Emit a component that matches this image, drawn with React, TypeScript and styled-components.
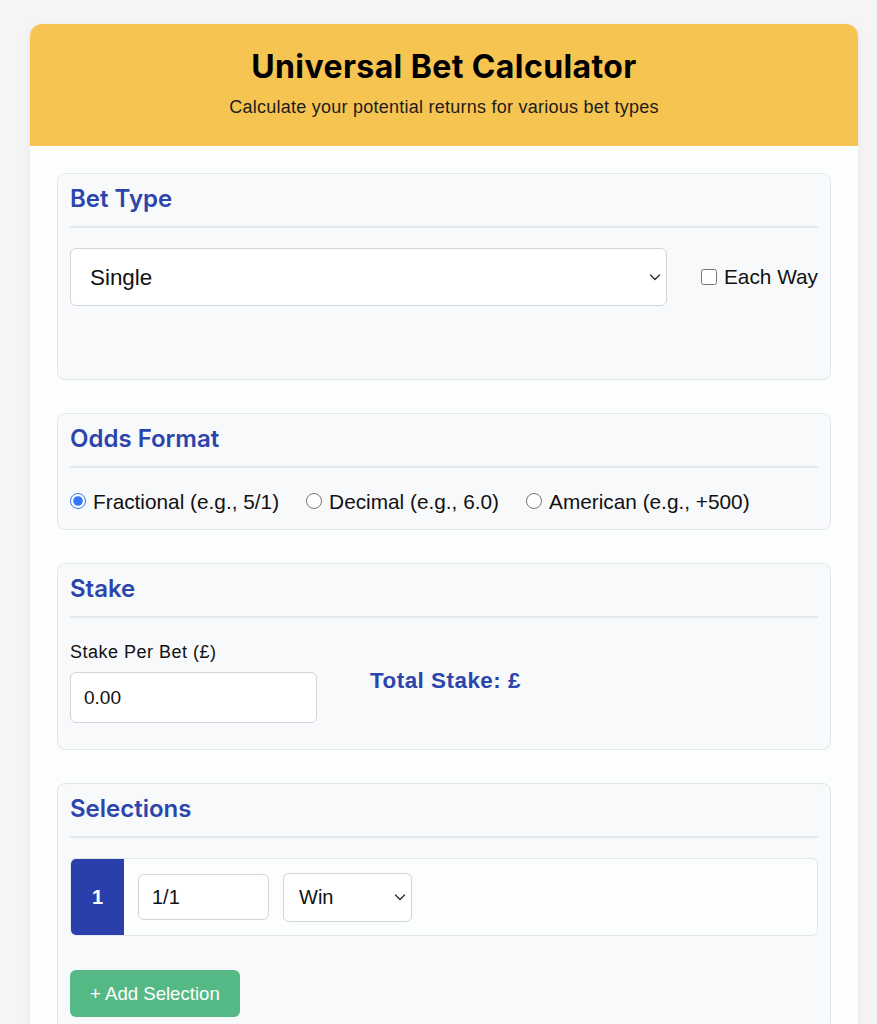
import React, { useState } from "react";
import styled, { createGlobalStyle } from "styled-components";

const GlobalStyle = createGlobalStyle`
  html, body {
    margin: 0;
    padding: 0;
    background: #f5f5f5;
  }
  body {
    font-family: "Liberation Sans", Arial, sans-serif;
    color: #111;
  }
  * { box-sizing: border-box; }
`;

const Container = styled.div`
  margin: 24px 19px 0 30px;
  background: #fcfdfd;
  border-radius: 12px;
  box-shadow: 0 2px 10px rgba(0, 0, 0, 0.06);
  overflow: hidden;
`;

const Header = styled.header`
  background: #f5c451;
  text-align: center;
  padding: 24px 20px 27px;
`;

const Title = styled.h1`
  margin: 0 0 10px;
  font-family: Inter, "Noto Sans", sans-serif;
  font-size: 32px;
  font-weight: 700;
  line-height: 38px;
  letter-spacing: 0.4px;
  color: #000;
`;

const Subtitle = styled.p`
  margin: 0;
  font-size: 18px;
  line-height: 23px;
  letter-spacing: 0.25px;
  color: #1c1c1c;
`;

const Body = styled.main`
  padding: 27px 27px 40px;
  display: flex;
  flex-direction: column;
  gap: 33px;
`;

const Section = styled.section`
  background: #f8f9fa;
  border: 1px solid #e3e6ea;
  border-radius: 8px;
  padding: 10px 12px 13px;
`;

const SectionTitle = styled.h2`
  margin: 0 0 20px;
  padding-bottom: 13px;
  border-bottom: 2px solid #e6e8ef;
  font-family: Inter, "Noto Sans", sans-serif;
  font-size: 24px;
  font-weight: 600;
  line-height: 29px;
  color: #2b45ad;
`;

const SectionBody = styled.div<{ $minHeight?: number }>`
  min-height: ${(p) => (p.$minHeight ? `${p.$minHeight}px` : "auto")};
`;

const Row = styled.div<{ $gap: number }>`
  display: flex;
  align-items: center;
  gap: ${(p) => p.$gap}px;
`;

const SelectWrap = styled.div<{ $width?: number }>`
  position: relative;
  flex: ${(p) => (p.$width ? "none" : "1")};
  width: ${(p) => (p.$width ? `${p.$width}px` : "auto")};
  svg {
    position: absolute;
    right: 5px;
    top: 50%;
    transform: translateY(-50%);
    pointer-events: none;
  }
`;

const Select = styled.select<{ $height: number; $size: number }>`
  appearance: none;
  width: 100%;
  height: ${(p) => p.$height}px;
  padding: 0 30px 0 ${(p) => (p.$size > 21 ? 19 : 15)}px;
  font-family: "Liberation Sans", Arial, sans-serif;
  font-size: ${(p) => p.$size}px;
  color: #111;
  background: #fff;
  border: 1px solid #cfd3da;
  border-radius: 6px;
  outline: none;
`;

const CheckLabel = styled.label`
  display: flex;
  align-items: center;
  gap: 7px;
  font-size: 20.8px;
  color: #111;
  white-space: nowrap;
  input {
    width: 16px;
    height: 16px;
    margin: 0;
  }
`;

const RadioRow = styled.div`
  display: flex;
  align-items: center;
  gap: 27px;
  height: 26px;
  margin-bottom: 2px;
`;

const RadioLabel = styled.label`
  display: flex;
  align-items: center;
  gap: 7px;
  font-size: 20.8px;
  line-height: 23px;
  color: #111;
  white-space: nowrap;
  input {
    width: 16px;
    height: 16px;
    margin: 0;
    accent-color: #3478f6;
  }
`;

const Field = styled.div`
  padding: 4px 0 13px;
`;

const FieldLabel = styled.label`
  display: block;
  margin-bottom: 10px;
  font-size: 18px;
  line-height: 20px;
  letter-spacing: 0.5px;
  color: #111;
`;

const TextInput = styled.input<{ $width: number; $height: number }>`
  width: ${(p) => p.$width}px;
  height: ${(p) => p.$height}px;
  padding: 0 13px;
  font-family: "Liberation Sans", Arial, sans-serif;
  font-size: ${(p) => (p.$height > 48 ? 19 : 20)}px;
  color: #111;
  background: #fff;
  border: 1px solid #cfd3da;
  border-radius: 6px;
  outline: none;
`;

const TotalStake = styled.div`
  font-size: 22.4px;
  font-weight: 700;
  letter-spacing: 0.5px;
  color: #2b45ad;
  padding-bottom: 13px;
`;

const SelectionRow = styled.div`
  display: flex;
  align-items: center;
  gap: 14px;
  height: 78px;
  background: #fcfdfd;
  border: 1px solid #e3e6ea;
  border-radius: 6px;
  overflow: hidden;
`;

const Badge = styled.div`
  width: 53px;
  align-self: stretch;
  display: flex;
  align-items: center;
  justify-content: center;
  background: #2a3fab;
  color: #fff;
  font-size: 20px;
  font-weight: 700;
`;

const AddButton = styled.button`
  margin-top: 34px;
  height: 47px;
  padding: 0 20px;
  background: #55b986;
  color: #fff;
  font-family: "Liberation Sans", Arial, sans-serif;
  font-size: 18.6px;
  border: none;
  border-radius: 6px;
  cursor: pointer;
`;

const Chevron = () => (
  <svg width="14" height="14" viewBox="0 0 14 14" fill="none">
    <path d="M2.5 5l4.5 4.5L11.5 5" stroke="#333" strokeWidth="1.4" strokeLinecap="round" strokeLinejoin="round" />
  </svg>
);

const App: React.FC = () => {
  const [format, setFormat] = useState("fractional");

  return (
    <>
      <GlobalStyle />
      <Container>
        <Header>
          <Title>Universal Bet Calculator</Title>
          <Subtitle>Calculate your potential returns for various bet types</Subtitle>
        </Header>
        <Body>
          <Section>
            <SectionTitle>Bet Type</SectionTitle>
            <SectionBody $minHeight={118}>
              <Row $gap={34}>
                <SelectWrap>
                  <Select $height={58} $size={22.4} defaultValue="single">
                    <option value="single">Single</option>
                    <option value="double">Double</option>
                    <option value="treble">Treble</option>
                    <option value="accumulator">Accumulator</option>
                  </Select>
                  <Chevron />
                </SelectWrap>
                <CheckLabel>
                  <input type="checkbox" />
                  Each Way
                </CheckLabel>
              </Row>
            </SectionBody>
          </Section>

          <Section>
            <SectionTitle>Odds Format</SectionTitle>
            <RadioRow>
              {[
                ["fractional", "Fractional (e.g., 5/1)"],
                ["decimal", "Decimal (e.g., 6.0)"],
                ["american", "American (e.g., +500)"],
              ].map(([value, label]) => (
                <RadioLabel key={value}>
                  <input
                    type="radio"
                    name="odds"
                    checked={format === value}
                    onChange={() => setFormat(value)}
                  />
                  {label}
                </RadioLabel>
              ))}
            </RadioRow>
          </Section>

          <Section>
            <SectionTitle>Stake</SectionTitle>
            <Row $gap={53}>
              <Field>
                <FieldLabel>Stake Per Bet (£)</FieldLabel>
                <TextInput $width={247} $height={51} defaultValue="0.00" />
              </Field>
              <TotalStake>Total Stake: £</TotalStake>
            </Row>
          </Section>

          <Section>
            <SectionTitle>Selections</SectionTitle>
            <SelectionRow>
              <Badge>1</Badge>
              <TextInput $width={131} $height={46} defaultValue="1/1" />
              <SelectWrap $width={129}>
                <Select $height={49} $size={20} defaultValue="win">
                  <option value="win">Win</option>
                  <option value="lose">Lose</option>
                  <option value="void">Void</option>
                </Select>
                <Chevron />
              </SelectWrap>
            </SelectionRow>
            <AddButton>+ Add Selection</AddButton>
          </Section>
        </Body>
      </Container>
    </>
  );
};

export default App;
